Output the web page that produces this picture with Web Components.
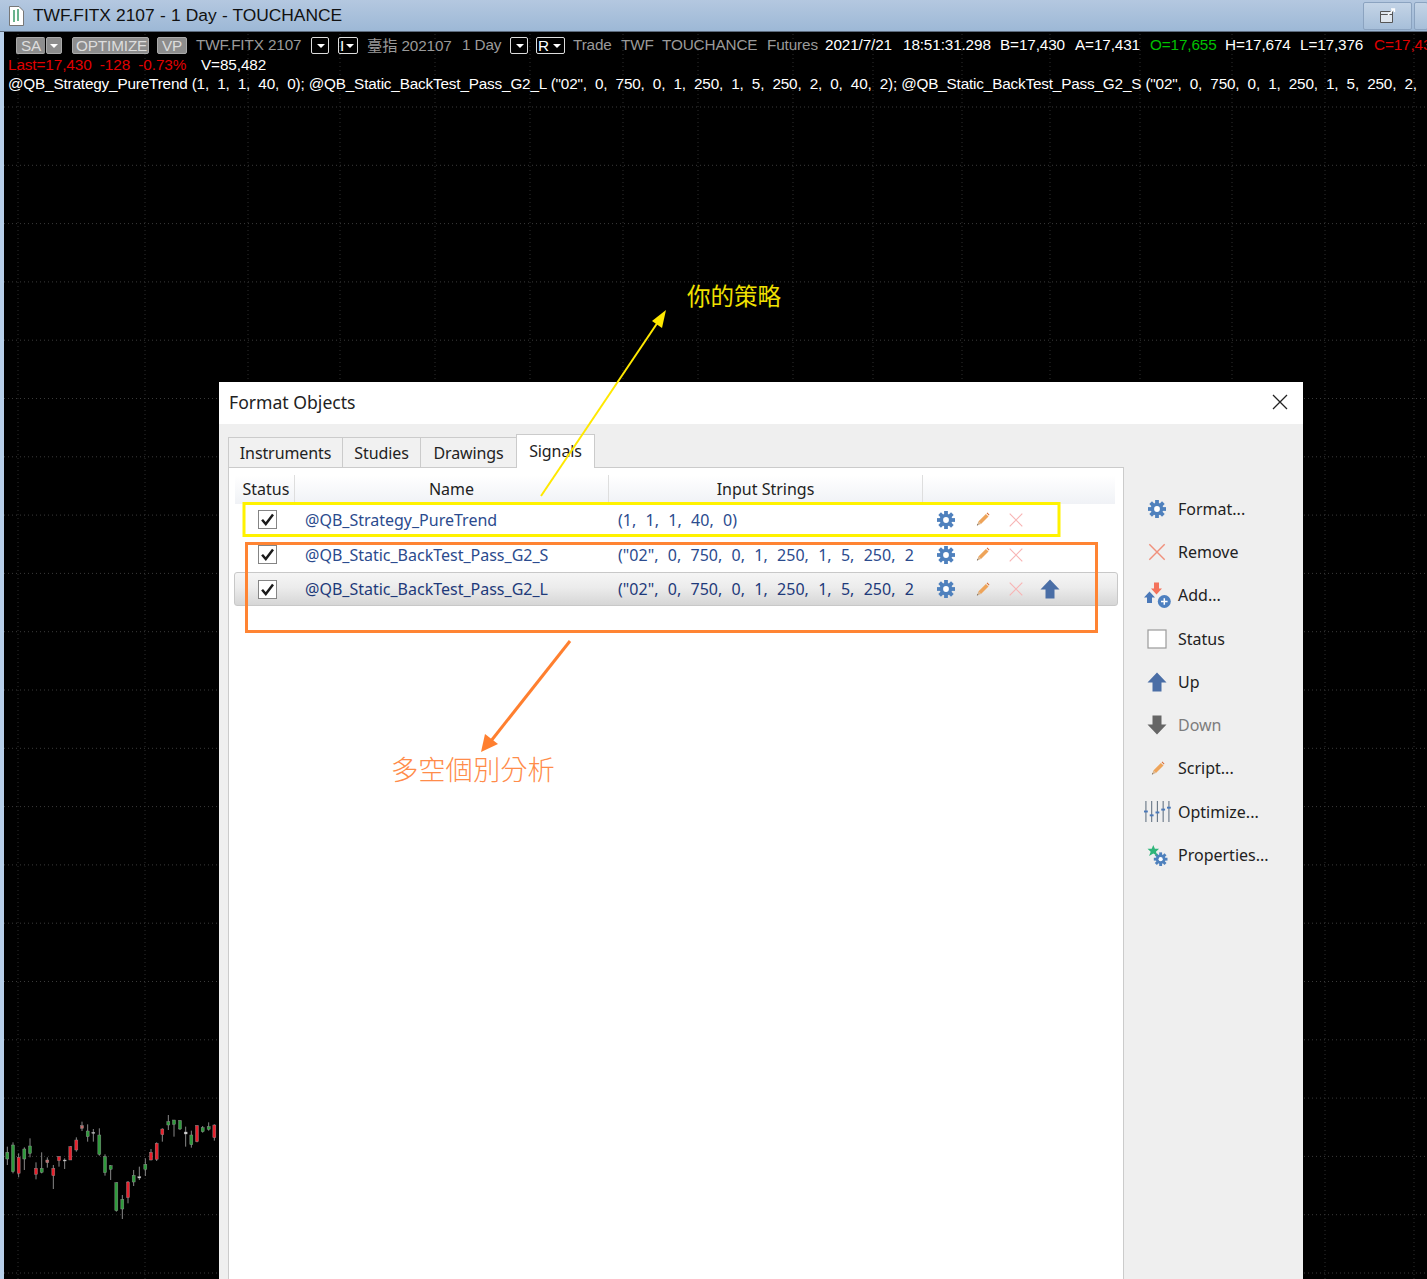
<!DOCTYPE html>
<html>
<head>
<meta charset="utf-8">
<title>Format Objects</title>
<style>
	html, body { margin: 0; height: 100%; overflow: hidden; background: #000; }
</style>
</head>
<body>
<chart-window>
	<format-dialog></format-dialog>
	<chart-notes></chart-notes>
</chart-window>

<script>
const ICONS = {
	x: `<path d="M3 3L17 17M17 3L3 17" stroke="currentColor" stroke-width="1.3" fill="none"/>`,
	up: `<path d="M10 .5L.5 10.500H5.500V19.500H14.500V10.500H19.500Z" fill="currentColor"/>`,
	down: `<path d="M10 19.500L.5 9.500H5.500V.5H14.500V9.500H19.500Z" fill="currentColor"/>`,
	pencil: `<path d="M14.500 2.500L18 6L8 16L4.500 12.500Z" fill="currentColor"/><path d="M15.500 1.500L16.500 .8L19.300 3.600L18.500 4.600Z" fill="#d8662e"/><path d="M4.500 12.500L8 16L2.500 18Z" fill="#d9b48c"/><path d="M3.200 16L4.500 17.300L2.500 18Z" fill="#555"/>`,
	box: `<rect x="1" y="1" width="18" height="18" fill="#fff" stroke="#9a9a9a" stroke-width="1.200"/>`,
	check: `<rect x=".5" y=".5" width="19" height="19" fill="#fff" stroke="#7f7f7f" stroke-width="1"/><path d="M4.300 10.200L8.200 14.800L15.800 4.800" fill="none" stroke="#1b1b1b" stroke-width="2.600"/>`,
	add: `<path d="M5.500 9L0 15H3V20.500H8V15H11Z" fill="#4a78b8"/><path d="M12.500 12L18 6H15V0H10V6H7Z" fill="#f4735c"/><circle cx="20.300" cy="19" r="6.500" fill="#4d80c0"/><path d="M17 19H23.600M20.300 15.700V22.300" stroke="#fff" stroke-width="1.500"/>`,
	sliders: `<g stroke="#6c7a8a" stroke-width="1.200"><path d="M2 1V23M8 1V23M14 1V23M20 1V23M26 1V23"/></g><g fill="#4a78b8"><rect x="0" y="11" width="4" height="2"/><rect x="6" y="15" width="4" height="2"/><rect x="12" y="12" width="4" height="2"/><rect x="18" y="9" width="4" height="2"/><rect x="24" y="7" width="4" height="2"/></g>`,
}

function gearShape(cx, cy, r, hole, color) {
	let teeth = ""
	for (let i = 0; i < 8; i++) {
		teeth += `<rect x="${cx - r * 0.21}" y="${cy - r}" width="${r * 0.42}" height="${r * 0.5}" fill="${color}" transform="rotate(${i * 45} ${cx} ${cy})"/>`
	}
	return teeth + `<circle cx="${cx}" cy="${cy}" r="${r * 0.7}" fill="${color}"/><circle cx="${cx}" cy="${cy}" r="${hole}" fill="#fff"/>`
}

customElements.define("q-icon", class extends HTMLElement {
	connectedCallback() {
		const name = this.getAttribute("name")
		const size = +this.getAttribute("size") || 20
		const views = {sliders: "0 0 28 24", add: "0 0 27 26"}
		const view = views[name] || "0 0 20 20"
		let body = ICONS[name] || ""
		if (name === "gear") body = gearShape(10, 10, 10, 3.200, "#4f81bd")
		if (name === "props") {
			body = gearShape(13, 13.500, 6.500, 2, "#4f81bd") +
				`<path d="M6 0L7.500 3.500L11.500 3.500L8.500 6.500L10 10.500L6 8L2 10.500L3.500 6.500L.5 3.500L4.500 3.500Z" fill="#2fb57a"/>`
		}
		const width = name === "sliders" ? size * 28 / 24 : size
		this.attachShadow({mode: "open"}).innerHTML = `
			<style>
				:host { display: inline-flex; align-items: center; justify-content: center; }
				svg { display: block; overflow: visible; }
			</style>
			<svg width="${width}" height="${size}" viewBox="${view}">${body}</svg>
		`
	}
})

customElements.define("chart-window", class extends HTMLElement {
	connectedCallback() {
		this.attachShadow({mode: "open"}).innerHTML = `
			<style>
				:host {
					display: flex;
					flex-direction: column;
					height: 100vh;
					width: 100%;
					font-family: "Liberation Sans", Arial, sans-serif;
				}
				.bar {
					flex: 0 0 31px;
					display: flex;
					align-items: center;
					padding-left: 9px;
					background: linear-gradient(#b4c8e0, #9db8d6);
					border-bottom: 1px solid #5d6b7c;
					color: #111;
					font-size: 17.400px;
					overflow: hidden;
				}
				.doc { width: 15px; height: 20px; margin-right: 9px; }
				.title { flex: 1; letter-spacing: -0.050px; word-spacing: .5px; }
				.winbtn {
					width: 47px;
					height: 26px;
					margin-right: 2px;
					border: 1px solid #8ba3c0;
					border-radius: 2px;
					background: linear-gradient(#c4d4e6, #a7bfd9);
					display: flex;
					align-items: center;
					justify-content: center;
					flex: none;
				}
				.winbtn.cut { width: 12px; margin-right: -1px; }
				.canvas {
					position: relative;
					flex: 1;
					background: #000;
					border-left: 4px solid #b8d0ea;
					overflow: hidden;
				}
				.grid { position: absolute; left: -4px; top: -32px; }
				.info {
					position: relative;
					font-size: 15.300px;
					letter-spacing: -0.130px;
					color: #fff;
					padding-top: 3px;
				}
				.row { display: flex; align-items: center; height: 19.500px; }
				.row span { white-space: pre; flex: none; }
				.row1 { margin-left: 12px; height: 20px; color: #9a9a9a; }
				.row2 { margin-left: 4px; letter-spacing: -0.100px; }
				.row3 { margin-left: 4px; letter-spacing: -0.170px; }
				.tag {
					background: #8d8d8d;
					color: #ddd;
					border: 1px solid #aaa;
					border-radius: 2px;
					height: 15px;
					line-height: 15px;
					padding: 0 3px;
					text-align: center;
				}
				.row .drop {
					width: 16px;
					height: 15px;
					border: 1px solid #ddd;
					border-radius: 2px;
					position: relative;
					color: #fff;
					line-height: 15px;
					text-indent: 1px;
				}
				.drop::after {
					content: "";
					position: absolute;
					right: 3px;
					top: 6px;
					border: 4px solid transparent;
					border-top: 4px solid #fff;
					border-bottom: 0;
				}
				.row .w { color: #fff; }
				.row .r { color: #e00000; }
				.row .g { color: #00c000; }
				.candles { position: absolute; left: -4px; top: -32px; }
			</style>
			<div class="bar">
				<svg class="doc" viewBox="0 0 15 20">
					<path d="M.5 .5H10L14.500 5V19.500H.5Z" fill="#fff" stroke="#777"/>
					<path d="M5 4V16M9 3V15" stroke="#3a9a6a" stroke-width="1.500"/>
				</svg>
				<span class="title">TWF.FITX 2107 - 1 Day - TOUCHANCE</span>
				<div class="winbtn">
					<svg width="18" height="16" viewBox="0 0 18 16">
						<path d="M1.500 3.500H13.500V14.500H1.500Z" fill="#dfe6ee" stroke="#555"/>
						<path d="M1.500 6.500H13.500" stroke="#555"/>
						<path d="M9 7L15 1M12 1H15.500V4" stroke="#fff" stroke-width="1.300" fill="none"/>
					</svg>
				</div>
				<div class="winbtn cut"></div>
			</div>
			<div class="canvas">
				<svg class="grid" width="1427" height="1279"></svg>
				<svg class="candles" width="240" height="1279"></svg>
				<div class="info">
					<div class="row row1"><span class="tag" style="width:22px;border-right:0">SA</span><span class="drop" style="width:14px;margin-left:1px;border-color:#aaa;background:#8d8d8d"></span><span class="tag" style="margin-left:10px;width:69px">OPTIMIZE</span><span class="tag" style="margin-left:8px;width:22px">VP</span><span style="margin-left:9px;width:115px">TWF.FITX 2107</span><span class="drop"></span><span class="drop" style="margin-left:9px;width:18px">I</span><span style="margin-left:9px;margin-top:-2px;width:95px;font-family:'Liberation Sans','Noto Sans CJK TC',sans-serif">臺指 202107</span><span style="width:48px">1 Day</span><span class="drop"></span><span class="drop" style="margin-left:8px;width:27px">R</span><span style="margin-left:8px;width:48px">Trade</span><span style="width:41px">TWF</span><span style="width:105px">TOUCHANCE</span><span style="width:58px">Futures</span><span class="w" style="width:78px">2021/7/21</span><span class="w" style="width:97px">18:51:31.298</span><span class="w" style="width:75px">B=17,430</span><span class="w" style="width:75px">A=17,431</span><span class="g" style="width:75px">O=17,655</span><span class="w" style="width:75px">H=17,674</span><span class="w" style="width:74px">L=17,376</span><span class="r">C=17,430</span></div>
					<div class="row row2"><span class="r" style="width:193px">Last=17,430  -128  -0.73%</span><span class="w">V=85,482</span></div>
					<div class="row row3"><span>@QB_Strategy_PureTrend (1,  1,  1,  40,  0); @QB_Static_BackTest_Pass_G2_L ("02",  0,  750,  0,  1,  250,  1,  5,  250,  2,  0,  40,  2); @QB_Static_BackTest_Pass_G2_S ("02",  0,  750,  0,  1,  250,  1,  5,  250,  2,</span></div>
				</div>
				<slot></slot>
			</div>
		`
		this._drawGrid()
		this._drawCandles()
	}

	_drawGrid() {
		let out = ""
		for (let y = 107; y < 1279; y += 58.300) {
			out += `<line x1="4" x2="1427" y1="${y}" y2="${y}" stroke="#3a3a3a" stroke-dasharray="1 3"/>`
		}
		for (const x of [18, 145, 248, 340, 435, 530, 623, 698, 793, 873, 962, 1050, 1140, 1232, 1325, 1414]) {
			out += `<line x1="${x}" x2="${x}" y1="34" y2="1279" stroke="#2e2e2e" stroke-dasharray="1 3"/>`
		}
		this.shadowRoot.querySelector(".grid").innerHTML = out
	}

	_drawCandles() {
		// x, wick top, wick bottom, body top, body bottom, colour key (read off the reference at 3x)
		const data = [
			[22,140,195,157,177,"g"],[39,127,220,135,215,"g"],[56,160,232,172,220,"r"],[73,142,210,147,177,"g"],
			[90,115,172,138,160,"g"],[108,187,238,205,223,"r"],[125,157,220,205,217,"g"],[142,172,203,180,188,"p"],
			[160,195,267,205,227,"r"],[177,168,200,170,182,"r"],[194,175,207,180,182,"w"],[211,138,180,140,180,"r"],
			[229,112,155,120,150,"r"],[246,65,93,77,85,"p"],[263,73,125,93,110,"g"],[280,87,125,97,99,"w"],
			[298,85,167,105,163,"g"],[315,163,227,170,218,"g"],[332,195,240,197,208,"g"],[349,247,335,248,332,"g"],
			[367,285,357,298,327,"g"],[384,243,310,246,293,"r"],[401,210,258,226,246,"g"],[418,200,240,230,234,"w"],
			[436,175,228,193,208,"g"],[453,147,181,157,180,"r"],[470,127,183,130,178,"r"],[487,85,125,87,104,"r"],
			[505,45,90,65,75,"g"],[522,60,110,60,73,"g"],[540,60,90,62,87,"g"],[557,80,140,96,102,"w"],
			[574,92,143,105,134,"g"],[591,75,127,77,125,"r"],[608,78,98,83,95,"g"],[626,67,92,80,88,"g"],[643,73,122,75,113,"r"],
		]
		const fills = {g: "#2f9a3c", r: "#e8202c", p: "#c46a6a", w: "#ddd"}
		let out = ""
		for (const [x, t, b, bt, bb, c] of data) {
			const px = x / 3
			out += `<line x1="${px}" x2="${px}" y1="${1100 + t / 3}" y2="${1100 + b / 3}" stroke="#aaa" stroke-width=".8"/>`
			out += `<rect x="${px - 1.500}" y="${1100 + bt / 3}" width="3" height="${Math.max((bb - bt) / 3, 1)}" fill="${fills[c]}" stroke="#999" stroke-width=".4"/>`
		}
		this.shadowRoot.querySelector(".candles").innerHTML = out
	}
})

customElements.define("tab-strip", class extends HTMLElement {
	connectedCallback() {
		const names = [["Instruments", 114], ["Studies", 78], ["Drawings", 96], ["Signals", 79]]
		const active = this.getAttribute("active")
		this.attachShadow({mode: "open"}).innerHTML = `
			<style>
				:host { display: flex; align-items: flex-end; height: 34px; margin-bottom: -1px; position: relative; z-index: 1; letter-spacing: -0.100px; }
				div {
					box-sizing: border-box;
					height: 31px;
					line-height: 31px;
					text-align: center;
					border: 1px solid #cbcbcb;
					border-right: 0;
					background: #f1f1f1;
					color: #222;
				}
				div.on {
					height: 34px;
					line-height: 32px;
					background: #fff;
					border-right: 1px solid #cbcbcb;
					border-bottom: 0;
				}
			</style>
			${names.map(([n, w]) => `<div class="${n === active ? "on" : ""}" style="width:${w}px">${n}</div>`).join("")}
		`
	}
})

customElements.define("signal-row", class extends HTMLElement {
	connectedCallback() {
		const selected = this.hasAttribute("selected")
		this.attachShadow({mode: "open"}).innerHTML = `
			<style>
				:host {
					display: grid;
					grid-template-columns: 70px 313px 313px 30px 42px 26px 42px;
					align-items: center;
					height: 35px;
					color: #2b4b8e;
				}
				:host([selected]) {
					box-sizing: border-box;
					height: 34px;
					margin: 0 -3px 0 -1px;
					border: 1px solid #c8c8c8;
					border-radius: 3px;
					background: linear-gradient(#f5f5f5, #ececec 45%, #d6d6d6);
					color: #1e3a7a;
				}
				.c { display: flex; justify-content: center; }
				.box { padding-right: 6px; }
				.name, .args { white-space: pre; overflow: hidden; }
				.args { word-spacing: .5px; }
			</style>
			<div class="c box"><q-icon name="check" size="19"></q-icon></div>
			<div class="name"><slot name="name"></slot></div>
			<div class="args"><slot name="args"></slot></div>
			<div class="c"><q-icon name="gear" size="18"></q-icon></div>
			<div class="c" style="color:#eea45a"><q-icon name="pencil" size="15"></q-icon></div>
			<div class="c" style="color:#f8b4b4"><q-icon name="x" size="18"></q-icon></div>
			<div class="c" style="color:#4a6ea6">${selected ? `<q-icon name="up" size="20"></q-icon>` : ""}</div>
		`
	}
})

customElements.define("signal-table", class extends HTMLElement {
	connectedCallback() {
		this.attachShadow({mode: "open"}).innerHTML = `
			<style>
				:host { display: block; margin: 7px 8px 0 6px; }
				.head {
					display: grid;
					grid-template-columns: 60px 314px 314px 1fr;
					height: 27px;
					line-height: 29px;
					text-align: center;
					color: #222;
					border-bottom: 1px solid #dcdcdc;
					margin-bottom: -1px;
				}
				.head div {
					background: linear-gradient(#fff, #f0f2f6);
					border-right: 1px solid #dedede;
				}
				.head div:first-child { padding-left: 3px; }
				.head div:last-child { border-right: 0; }
			</style>
			<div class="head"><div>Status</div><div>Name</div><div>Input Strings</div><div></div></div>
			<slot></slot>
		`
	}
})

customElements.define("side-action", class extends HTMLElement {
	connectedCallback() {
		const icon = this.getAttribute("icon")
		const size = this.getAttribute("size") || 20
		this.attachShadow({mode: "open"}).innerHTML = `
			<style>
				:host {
					display: flex;
					align-items: center;
					height: 43.300px;
					color: #222;
				}
				:host([disabled]) { color: #7d7d7d; }
				.i { width: 34px; display: flex; justify-content: center; margin-right: 4px; color: var(--ic, #4f81bd); }
			</style>
			<div class="i"><q-icon name="${icon}" size="${size}"></q-icon></div>
			<slot></slot>
		`
	}
})

customElements.define("format-dialog", class extends HTMLElement {
	connectedCallback() {
		const rows = [
			["@QB_Strategy_PureTrend", `(1,  1,  1,  40,  0)`],
			["@QB_Static_BackTest_Pass_G2_S", `("02",  0,  750,  0,  1,  250,  1,  5,  250,  2`],
			["@QB_Static_BackTest_Pass_G2_L", `("02",  0,  750,  0,  1,  250,  1,  5,  250,  2`],
		]
		this.attachShadow({mode: "open"}).innerHTML = `
			<style>
				:host {
					position: absolute;
					left: 215px;
					top: 350px;
					width: 1084px;
					height: 897px;
					display: flex;
					flex-direction: column;
					background: #efefef;
					font-family: "Noto Sans", "Open Sans", sans-serif;
					font-size: 16px;
					color: #222;
				}
				.top {
					flex: 0 0 42px;
					display: flex;
					align-items: center;
					justify-content: space-between;
					padding: 0 15px 2px 10px;
					box-sizing: border-box;
					background: #fff;
					font-size: 17.600px;
				}
				.body { flex: 1; display: flex; padding: 10px 0 0 9px; min-height: 0; }
				.main { width: 896px; display: flex; flex-direction: column; }
				.panel { flex: 1; background: #fff; border: 1px solid #cbcbcb; border-bottom: 0; }
				.side { padding: 53px 0 0 16px; }
			</style>
			<div class="top">
				<span>Format Objects</span>
				<svg width="16" height="16" viewBox="0 0 16 16"><path d="M1 1L15 15M15 1L1 15" stroke="#222" stroke-width="1.300"/></svg>
			</div>
			<div class="body">
				<div class="main">
					<tab-strip active="Signals"></tab-strip>
					<div class="panel">
						<signal-table>
							${rows.map((r, i) => `<signal-row ${i === 2 ? "selected" : ""}><span slot="name">${r[0]}</span><span slot="args">${r[1]}</span></signal-row>`).join("")}
						</signal-table>
					</div>
				</div>
				<div class="side">
					<side-action icon="gear" size="18">Format...</side-action>
					<side-action icon="x" size="22" style="--ic:#f0907c">Remove</side-action>
					<side-action icon="add" size="27">Add...</side-action>
					<side-action icon="box">Status</side-action>
					<side-action icon="up" style="--ic:#4a6ea6">Up</side-action>
					<side-action icon="down" disabled style="--ic:#666">Down</side-action>
					<side-action icon="pencil" size="15" style="--ic:#eea45a">Script...</side-action>
					<side-action icon="sliders" size="23">Optimize...</side-action>
					<side-action icon="props" size="21">Properties...</side-action>
				</div>
			</div>
		`
	}
})

customElements.define("chart-notes", class extends HTMLElement {
	connectedCallback() {
		this.attachShadow({mode: "open"}).innerHTML = `
			<style>
				:host { position: absolute; z-index: 2; left: -4px; top: -32px; width: 1427px; height: 1279px; pointer-events: none; }
				svg { position: absolute; left: 0; top: 0; }
				.note { position: absolute; font-family: "Noto Sans CJK TC", sans-serif; white-space: nowrap; }
			</style>
			<svg width="1427" height="1279" fill="none">
				<path d="M541 496L660 319" stroke="#ffe800" stroke-width="2"/>
				<path d="M666 310L652 321L662 328Z" fill="#ffe800"/>
				<rect x="244" y="503.500" width="815" height="32" stroke="#fff200" stroke-width="3"/>
				<rect x="246.500" y="543.500" width="850" height="88" stroke="#ff8433" stroke-width="3"/>
				<path d="M570 641L491 741" stroke="#ff7f2f" stroke-width="3"/>
				<path d="M481 752L485 734L498 744Z" fill="#ff7f2f"/>
			</svg>
			<div class="note" style="left:687px;top:277px;font-size:23.500px;line-height:36px;color:#f0e000">你的策略</div>
			<div class="note" style="left:391px;top:748px;font-size:27.300px;line-height:40px;color:#ff8c4a;font-weight:300">多空個別分析</div>
		`
	}
})
</script>
</body>
</html>
